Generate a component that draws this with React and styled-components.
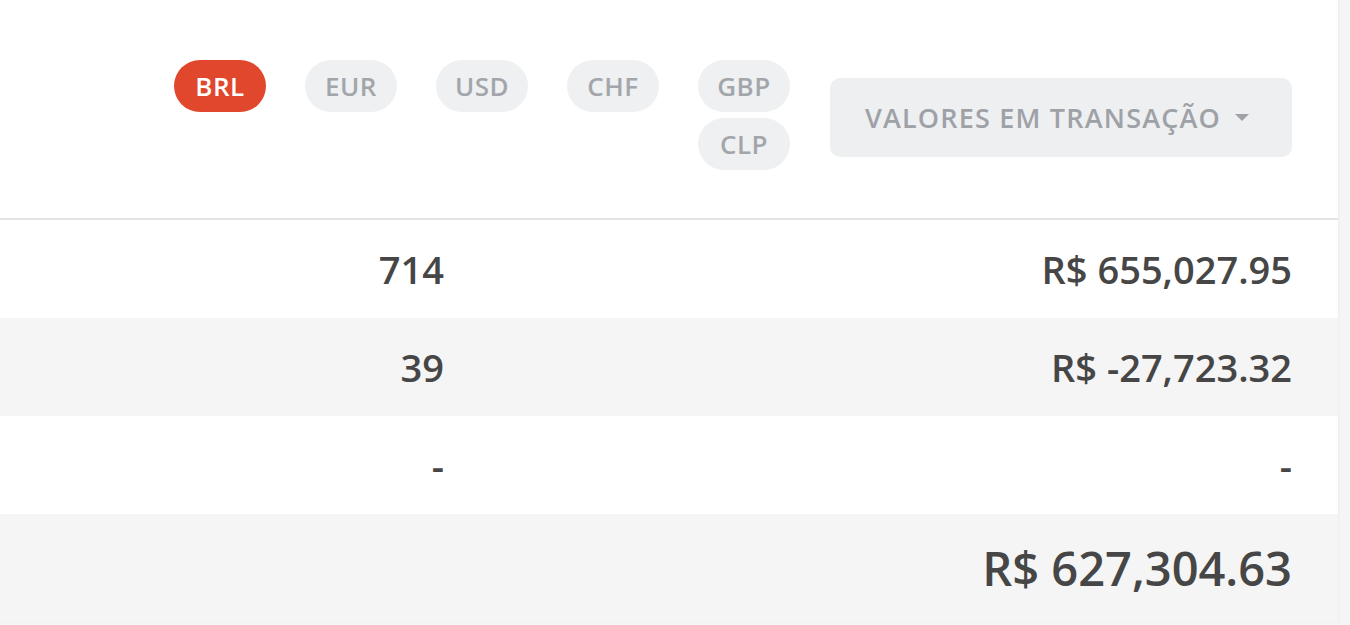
import React, { useState } from "react";
import styled, { createGlobalStyle } from "styled-components";

const currencies = ["BRL", "EUR", "USD", "CHF", "GBP", "CLP"];
const rows = [
  { count: "714", value: "R$ 655,027.95" },
  { count: "39", value: "R$ -27,723.32" },
  { count: "-", value: "-" },
];
const total = "R$ 627,304.63";

const App = () => {
  const [active, setActive] = useState(0);

  return (
    <>
      <GlobalStyle />
      <Page>
        <Card>
          <Header>
            <PillGroup>
              {currencies.map((item, index) => (
                <Pill
                  key={item}
                  $active={active === index}
                  onClick={() => setActive(index)}
                >
                  {item}
                </Pill>
              ))}
            </PillGroup>
            <DropdownButton>
              VALORES EM TRANSAÇÃO
              <Caret />
            </DropdownButton>
          </Header>
          {rows.map((row, index) => (
            <Row key={index} $striped={index % 2 === 1}>
              <CountCell>{row.count}</CountCell>
              <ValueCell>{row.value}</ValueCell>
            </Row>
          ))}
          <Row $striped $total>
            <CountCell />
            <ValueCell $total>{total}</ValueCell>
          </Row>
        </Card>
      </Page>
    </>
  );
};

const GlobalStyle = createGlobalStyle`
  * { box-sizing: border-box; }
  html, body {
    margin: 0;
    padding: 0;
    background-color: #f5f5f5;
    font-family: "Open Sans", "Noto Sans", sans-serif;
  }
`;
const Page = styled.div`
  width: 100%;
  min-height: 625px;
  background-color: #f5f5f5;
`;
const Card = styled.div`
  width: 1338px;
  background-color: #ffffff;
  box-shadow: 1px 0 2px rgba(0, 0, 0, 0.04);
`;
const Header = styled.div`
  display: flex;
  justify-content: flex-end;
  align-items: flex-start;
  gap: 40px;
  height: 220px;
  padding: 60px 46px 0 0;
  border-bottom: 2px solid #e3e3e3;
`;
const PillGroup = styled.div`
  display: flex;
  flex-wrap: wrap;
  justify-content: flex-end;
  column-gap: 39px;
  row-gap: 6px;
  width: 620px;
`;
const Pill = styled.div`
  user-select: none;
  cursor: pointer;
  display: flex;
  justify-content: center;
  align-items: center;
  width: 92px;
  height: 52px;
  border-radius: 26px;
  font-size: 26px;
  font-weight: 600;
  letter-spacing: 0.5px;
  color: #a2a6ab;
  background-color: #eef0f2;
  ${(props) =>
    props.$active &&
    `
      color: #ffffff;
      background-color: #e0472c;
    `}
`;
const DropdownButton = styled.div`
  display: flex;
  align-items: center;
  justify-content: center;
  gap: 14px;
  width: 462px;
  height: 79px;
  margin-top: 18px;
  border-radius: 10px;
  background-color: #eeeff1;
  color: #9ea2a7;
  font-size: 27px;
  font-weight: 600;
  letter-spacing: 1.2px;
  padding-right: 8px;
`;
const Caret = styled.span`
  width: 0;
  height: 0;
  border-left: 7px solid transparent;
  border-right: 7px solid transparent;
  border-top: 7px solid #9ea2a7;
`;
const Row = styled.div`
  display: flex;
  align-items: center;
  height: ${(props) => (props.$total ? "108px" : "98px")};
  padding-right: 46px;
  background-color: ${(props) => (props.$striped ? "#f5f5f5" : "#ffffff")};
`;
const CountCell = styled.div`
  width: 444px;
  text-align: right;
  font-size: 38px;
  font-weight: 600;
  color: #464646;
`;
const ValueCell = styled.div`
  flex: 1;
  text-align: right;
  font-size: ${(props) => (props.$total ? "47px" : "38px")};
  font-weight: 600;
  color: #464646;
`;

export default App;
